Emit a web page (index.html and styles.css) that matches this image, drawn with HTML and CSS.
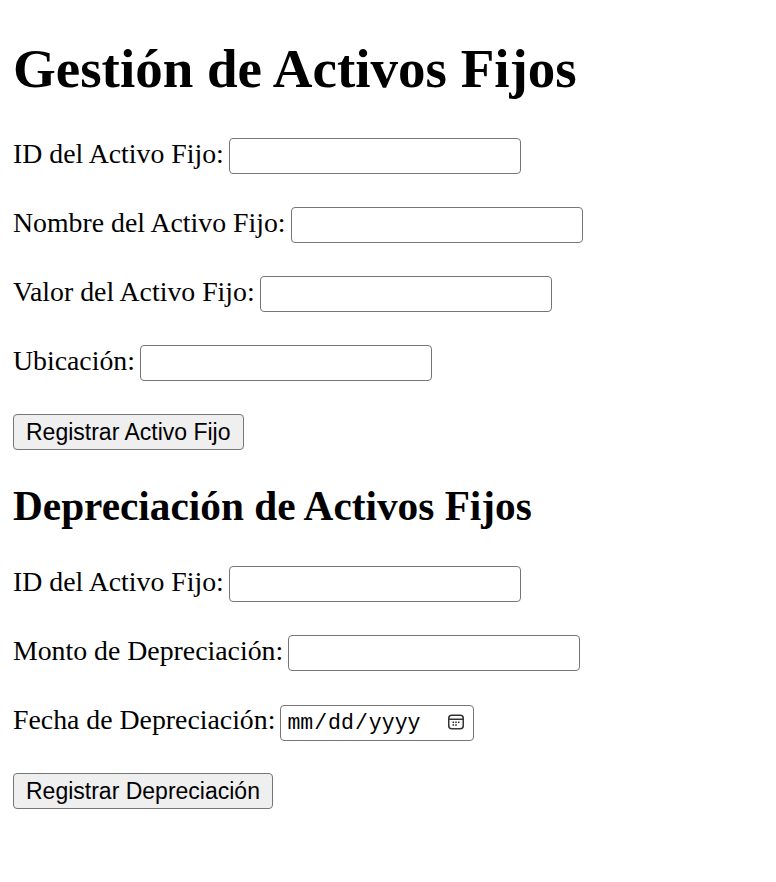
FILE: index.html
```html
<!DOCTYPE html>
<html lang="es">
<head>
<meta charset="utf-8">
<title>Gestión de Activos Fijos</title>
<link rel="stylesheet" href="styles.css">
</head>
<body>
<h1 class="title">Gestión de Activos Fijos</h1>
<form class="form">
  <div class="row"><label class="label" for="id1">ID del Activo Fijo:</label><input class="field" id="id1" type="text"></div>
  <div class="row"><label class="label" for="nombre">Nombre del Activo Fijo:</label><input class="field" id="nombre" type="text"></div>
  <div class="row"><label class="label" for="valor">Valor del Activo Fijo:</label><input class="field" id="valor" type="text"></div>
  <div class="row"><label class="label" for="ubic">Ubicación:</label><input class="field" id="ubic" type="text"></div>
  <div class="row row-btn"><button class="btn" type="button">Registrar Activo Fijo</button></div>
</form>
<h2 class="subtitle">Depreciación de Activos Fijos</h2>
<form class="form">
  <div class="row"><label class="label" for="id2">ID del Activo Fijo:</label><input class="field" id="id2" type="text"></div>
  <div class="row"><label class="label" for="monto">Monto de Depreciación:</label><input class="field" id="monto" type="text"></div>
  <div class="row"><label class="label" for="fecha">Fecha de Depreciación:</label><span class="date-wrap"><input class="field date" id="fecha" type="date"><svg class="cal-icon" width="18" height="18" viewBox="0 0 18 18" aria-hidden="true"><rect x="1.75" y="2.25" width="14.5" height="13.5" rx="3" fill="none" stroke="#333" stroke-width="1.5"/><line x1="2" y1="6.25" x2="16" y2="6.25" stroke="#333" stroke-width="1.5"/><rect x="5.5" y="8.5" width="1.6" height="1.6" fill="#333"/><rect x="8.2" y="8.5" width="1.6" height="1.6" fill="#333"/><rect x="10.9" y="8.5" width="1.6" height="1.6" fill="#333"/><rect x="5.5" y="11.2" width="1.6" height="1.6" fill="#333"/><rect x="8.2" y="11.2" width="1.6" height="1.6" fill="#333"/></svg></span></div>
  <div class="row row-btn"><button class="btn" type="button">Registrar Depreciación</button></div>
</form>
</body>
</html>
```
FILE: styles.css
```css
html {
  background: #ffffff;
}
body {
  margin: 0;
  padding: 14px 14px 14px 13px;
  font-family: "Liberation Serif", "Times New Roman", serif;
  font-size: 27.8px;
  color: #000000;
}
.title {
  font-size: 55px;
  font-weight: bold;
  line-height: 64px;
  margin: 23px 0 37px;
}
.subtitle {
  font-size: 41.3px;
  font-weight: bold;
  line-height: 48px;
  margin: 32px 0 36px;
}
.form {
  margin: 0;
}
.row {
  display: flex;
  align-items: flex-start;
  gap: 5px;
  height: 36px;
  padding-bottom: 5px;
  margin: 28px 0;
}
.row-btn {
  padding-bottom: 0;
}
.label {
  line-height: 32px;
  color: #000000;
  white-space: nowrap;
}
.field {
  box-sizing: border-box;
  width: 292px;
  height: 36px;
  margin: 0;
  padding: 2px 4px;
  border: 1.5px solid #767676;
  border-radius: 4px;
  background: #ffffff;
  font-family: "Liberation Sans", Arial, sans-serif;
  font-size: 23px;
}
.date-wrap {
  position: relative;
  display: inline-block;
  height: 36px;
}
.date {
  width: 194px;
  padding-left: 5px;
  font-family: "Liberation Mono", monospace;
  font-size: 21.5px;
  color: #000000;
}
.date::-webkit-calendar-picker-indicator {
  opacity: 0;
}
.cal-icon {
  position: absolute;
  right: 9px;
  top: 9px;
  pointer-events: none;
}
.btn {
  box-sizing: border-box;
  height: 36px;
  margin: 0;
  padding: 1px 12px;
  border: 1.5px solid #767676;
  border-radius: 4px;
  background: #efefef;
  font-family: "Liberation Sans", Arial, sans-serif;
  font-size: 23px;
  color: #000000;
}
```
